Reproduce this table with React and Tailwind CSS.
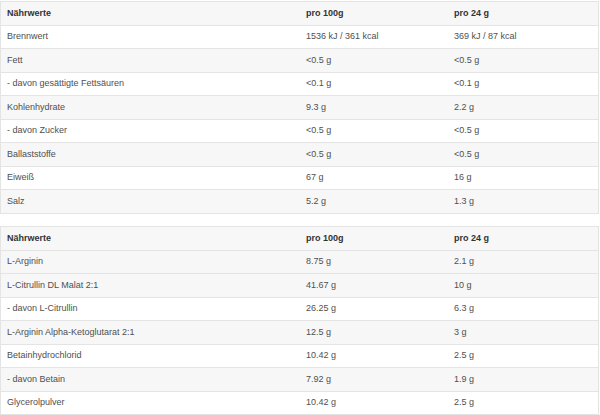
import React from "react";

const t1 = [
  ["Brennwert", "1536 kJ / 361 kcal", "369 kJ / 87 kcal", false],
  ["Fett", "<0.5 g", "<0.5 g", true],
  ["- davon gesättigte Fettsäuren", "<0.1 g", "<0.1 g", false],
  ["Kohlenhydrate", "9.3 g", "2.2 g", true],
  ["- davon Zucker", "<0.5 g", "<0.5 g", false],
  ["Ballaststoffe", "<0.5 g", "<0.5 g", true],
  ["Eiweiß", "67 g", "16 g", false],
  ["Salz", "5.2 g", "1.3 g", true],
];

const t2 = [
  ["L-Arginin", "8.75 g", "2.1 g", true],
  ["L-Citrullin DL Malat 2:1", "41.67 g", "10 g", true],
  ["- davon L-Citrullin", "26.25 g", "6.3 g", false],
  ["L-Arginin Alpha-Ketoglutarat 2:1", "12.5 g", "3 g", true],
  ["Betainhydrochlorid", "10.42 g", "2.5 g", false],
  ["- davon Betain", "7.92 g", "1.9 g", true],
  ["Glycerolpulver", "10.42 g", "2.5 g", false],
];

function Row({ cells, gray, header, first }) {
  return (
    <div
      className={
        "grid grid-cols-[299px_148px_1fr] items-center " +
        (first ? "h-[22.5px] " : "h-[23.5px] border-t border-[#e4e4e4] ") +
        (gray ? "bg-[#f7f7f7] " : "bg-white ") +
        (header ? "font-bold text-[#333]" : "text-[#4f4f4f]")
      }
    >
      {cells.map((c, i) => (
        <div key={i} className="pl-[6px] whitespace-nowrap">
          {c}
        </div>
      ))}
    </div>
  );
}

function Table({ rows }) {
  return (
    <div className="w-[599px] border border-[#e4e4e4]">
      <Row cells={["Nährwerte", "pro 100g", "pro 24 g"]} gray header first />
      {rows.map((r, i) => (
        <Row key={i} cells={[r[0], r[1], r[2]]} gray={r[3]} />
      ))}
    </div>
  );
}

export default function App() {
  return (
    <div
      className="w-[600px] h-[415px] bg-white pt-px text-[9px] leading-[11px] overflow-hidden"
      style={{ fontFamily: '"Liberation Sans", Arial, sans-serif' }}
    >
      <Table rows={t1} />
      <div className="h-[12.5px]" />
      <Table rows={t2} />
    </div>
  );
}
